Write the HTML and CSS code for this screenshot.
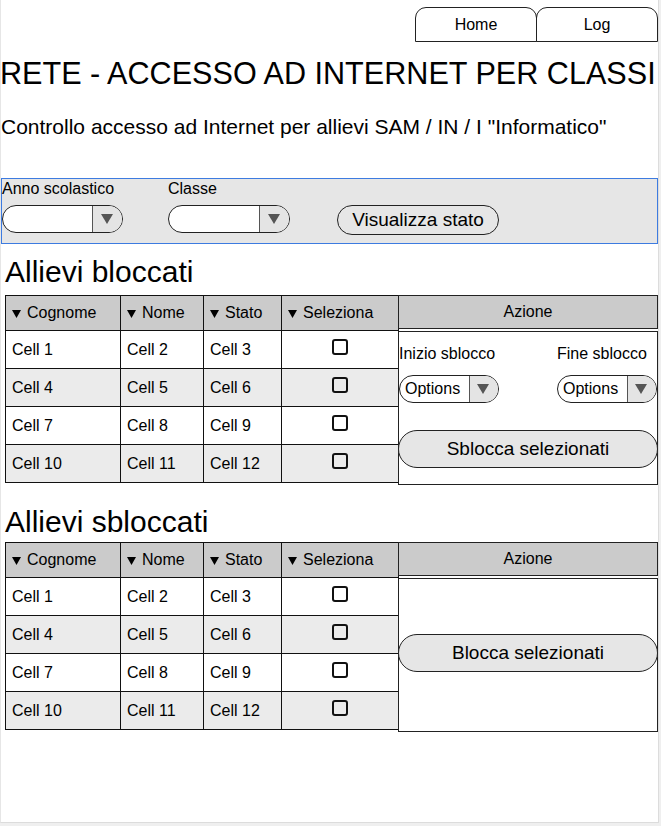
FILE: index.html
```html
<!DOCTYPE html>
<html lang="it">
<head>
<meta charset="utf-8">
<title>Rete - Accesso ad Internet per classi</title>
<link rel="stylesheet" href="styles.css">
</head>
<body>
<div class="page">
  <nav class="tabs">
    <div class="tab">Home</div>
    <div class="tab">Log</div>
  </nav>
  <h1 class="title">RETE - ACCESSO AD INTERNET PER CLASSI</h1>
  <p class="subtitle">Controllo accesso ad Internet per allievi SAM / IN / I "Informatico"</p>

  <section class="filters">
    <div class="field field-year">
      <label class="field-label">Anno scolastico</label>
      <div class="select">
        <span class="select-value"></span>
        <span class="select-btn"><svg width="12" height="10" viewBox="0 0 12 10"><path d="M0 0H12L6 10Z"/></svg></span>
      </div>
    </div>
    <div class="field field-class">
      <label class="field-label">Classe</label>
      <div class="select">
        <span class="select-value"></span>
        <span class="select-btn"><svg width="12" height="10" viewBox="0 0 12 10"><path d="M0 0H12L6 10Z"/></svg></span>
      </div>
    </div>
    <button class="pill-btn">Visualizza stato</button>
  </section>

  <h2 class="section-title first">Allievi bloccati</h2>
  <div class="block">
    <div class="grid">
      <div class="cell head"><span class="sort"><svg class="tri" width="9" height="8" viewBox="0 0 9 8"><path d="M0 0H9L4.5 8Z"/></svg>Cognome</span></div>
      <div class="cell head"><span class="sort"><svg class="tri" width="9" height="8" viewBox="0 0 9 8"><path d="M0 0H9L4.5 8Z"/></svg>Nome</span></div>
      <div class="cell head"><span class="sort"><svg class="tri" width="9" height="8" viewBox="0 0 9 8"><path d="M0 0H9L4.5 8Z"/></svg>Stato</span></div>
      <div class="cell head"><span class="sort"><svg class="tri" width="9" height="8" viewBox="0 0 9 8"><path d="M0 0H9L4.5 8Z"/></svg>Seleziona</span></div>

      <div class="cell">Cell 1</div><div class="cell">Cell 2</div><div class="cell">Cell 3</div><div class="cell check-cell"><span class="check"></span></div>
      <div class="cell alt">Cell 4</div><div class="cell alt">Cell 5</div><div class="cell alt">Cell 6</div><div class="cell alt check-cell"><span class="check"></span></div>
      <div class="cell">Cell 7</div><div class="cell">Cell 8</div><div class="cell">Cell 9</div><div class="cell check-cell"><span class="check"></span></div>
      <div class="cell alt">Cell 10</div><div class="cell alt">Cell 11</div><div class="cell alt">Cell 12</div><div class="cell alt check-cell"><span class="check"></span></div>
    </div>
    <div class="action">
      <div class="action-head">Azione</div>
      <div class="action-body unlock">
        <div class="range-row">
          <div class="range">
            <span class="range-label">Inizio sblocco</span>
            <div class="select small">
              <span class="select-value">Options</span>
              <span class="select-btn"><svg width="12" height="10" viewBox="0 0 12 10"><path d="M0 0H12L6 10Z"/></svg></span>
            </div>
          </div>
          <div class="range">
            <span class="range-label">Fine sblocco</span>
            <div class="select small">
              <span class="select-value">Options</span>
              <span class="select-btn"><svg width="12" height="10" viewBox="0 0 12 10"><path d="M0 0H12L6 10Z"/></svg></span>
            </div>
          </div>
        </div>
        <button class="wide-btn">Sblocca selezionati</button>
      </div>
    </div>
  </div>

  <h2 class="section-title second">Allievi sbloccati</h2>
  <div class="block">
    <div class="grid">
      <div class="cell head"><span class="sort"><svg class="tri" width="9" height="8" viewBox="0 0 9 8"><path d="M0 0H9L4.5 8Z"/></svg>Cognome</span></div>
      <div class="cell head"><span class="sort"><svg class="tri" width="9" height="8" viewBox="0 0 9 8"><path d="M0 0H9L4.5 8Z"/></svg>Nome</span></div>
      <div class="cell head"><span class="sort"><svg class="tri" width="9" height="8" viewBox="0 0 9 8"><path d="M0 0H9L4.5 8Z"/></svg>Stato</span></div>
      <div class="cell head"><span class="sort"><svg class="tri" width="9" height="8" viewBox="0 0 9 8"><path d="M0 0H9L4.5 8Z"/></svg>Seleziona</span></div>

      <div class="cell">Cell 1</div><div class="cell">Cell 2</div><div class="cell">Cell 3</div><div class="cell check-cell"><span class="check"></span></div>
      <div class="cell alt">Cell 4</div><div class="cell alt">Cell 5</div><div class="cell alt">Cell 6</div><div class="cell alt check-cell"><span class="check"></span></div>
      <div class="cell">Cell 7</div><div class="cell">Cell 8</div><div class="cell">Cell 9</div><div class="cell check-cell"><span class="check"></span></div>
      <div class="cell alt">Cell 10</div><div class="cell alt">Cell 11</div><div class="cell alt">Cell 12</div><div class="cell alt check-cell"><span class="check"></span></div>
    </div>
    <div class="action">
      <div class="action-head">Azione</div>
      <div class="action-body lock">
        <button class="wide-btn">Blocca selezionati</button>
      </div>
    </div>
  </div>
</div>
</body>
</html>
```

FILE: styles.css
```css
* { box-sizing: border-box; }
html, body { margin: 0; padding: 0; }
body {
  background: #efefef;
  font-family: "Liberation Sans", Arial, sans-serif;
  color: #000;
}
.page {
  width: 659px;
  height: 823px;
  background: #fff;
  border-left: 1px solid #e6e6e6;
  border-right: 1px solid #dcdcdc;
  border-bottom: 1px solid #dcdcdc;
  display: flex;
  flex-direction: column;
}
.tabs {
  display: flex;
  justify-content: flex-end;
  margin-top: 7px;
}
.tab {
  width: 122px;
  height: 35px;
  border: 1px solid #222;
  border-radius: 11px 11px 0 0;
  display: flex;
  align-items: center;
  justify-content: center;
  font-size: 16px;
}
.tab + .tab { margin-left: -1px; }

.title {
  margin: 13px 0 0 -1px;
  font-size: 30.6px;
  font-weight: normal;
  line-height: 37px;
  white-space: nowrap;
}
.subtitle {
  margin: 23px 0 0;
  font-size: 21px;
  line-height: 24px;
  white-space: nowrap;
}

.filters {
  margin-top: 39px;
  height: 66px;
  border: 1px solid #3d7be0;
  background: #e6e6e6;
  display: flex;
  align-items: flex-start;
  padding-top: 1px;
}
.field {
  display: flex;
  flex-direction: column;
  gap: 7px;
}
.field-year { width: 121px; }
.field-class { width: 122px; margin-left: 45px; }
.field-label {
  font-size: 16px;
  line-height: 18px;
  white-space: nowrap;
}
.select {
  display: flex;
  height: 28px;
  border: 1px solid #222;
  border-radius: 14px;
  background: #fff;
  overflow: hidden;
}
.select-value {
  flex: 1;
  font-size: 16px;
  line-height: 26px;
  padding-left: 5px;
}
.select-btn {
  width: 30px;
  border-left: 1px solid #555;
  background: #e4e4e4;
  display: flex;
  align-items: center;
  justify-content: center;
  padding-right: 2px;
}
.select-btn svg { fill: #555; }
.select.small { width: 100px; }
.select.small .select-btn { width: 29px; }

.pill-btn {
  margin: 25px 0 0 47px;
  width: 162px;
  height: 30px;
  border: 1px solid #222;
  border-radius: 15px;
  background: transparent;
  font-family: inherit;
  font-size: 19px;
  color: #000;
  padding: 0;
}

.section-title {
  margin: 0;
  padding-left: 4px;
  font-size: 30px;
  font-weight: normal;
  line-height: 30px;
  white-space: nowrap;
}
.section-title.first { margin: 13px 0 8px; }
.section-title.second { margin: 22px 0 5px; }

.block {
  display: flex;
  align-items: flex-start;
  margin-left: 4px;
}
.grid {
  display: grid;
  grid-template-columns: 115px 83px 78px 117px;
  border-left: 1px solid #111;
  border-top: 1px solid #111;
}
.cell {
  height: 38px;
  border-right: 1px solid #111;
  border-bottom: 1px solid #111;
  display: flex;
  align-items: center;
  padding-left: 6px;
  font-size: 16px;
  white-space: nowrap;
}
.cell.head {
  height: 35px;
  background: #cbcbcb;
}
.cell.alt { background: #ebebeb; }
.sort .tri {
  vertical-align: baseline;
  margin-right: 6px;
  fill: #000;
}
.check-cell {
  justify-content: center;
  padding-left: 0;
}
.check {
  width: 16px;
  height: 16px;
  border: 2px solid #111;
  border-radius: 3px;
  margin-bottom: 5px;
}

.action {
  width: 260px;
  margin-left: -1px;
}
.action-head {
  height: 34px;
  border: 1px solid #222;
  background: #cbcbcb;
  display: flex;
  align-items: center;
  justify-content: center;
  font-size: 16px;
}
.action-body {
  margin-top: 2px;
  height: 154px;
  border: 1px solid #222;
}
.action-body.unlock { padding-top: 13px; }
.action-body.lock {
  display: flex;
  flex-direction: column;
  justify-content: center;
  padding-bottom: 5px;
}
.range-row {
  display: flex;
  justify-content: space-between;
}
.range {
  width: 100px;
  display: flex;
  flex-direction: column;
  gap: 12px;
}
.range-label {
  font-size: 16px;
  line-height: 18px;
  white-space: nowrap;
}
.wide-btn {
  display: block;
  width: calc(100% + 2px);
  margin: 27px -1px 0;
  height: 38px;
  border: 1px solid #222;
  border-radius: 19px;
  background: #e6e6e6;
  font-family: inherit;
  font-size: 19px;
  color: #000;
  padding: 0;
}
.action-body.lock .wide-btn { margin-top: 0; }
```
